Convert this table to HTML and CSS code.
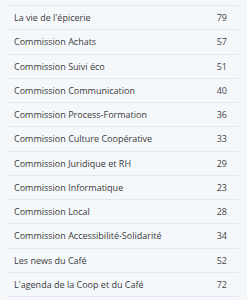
FILE: index.html
```html
<!DOCTYPE html>
<html lang="fr">
<head>
<meta charset="utf-8">
<link rel="stylesheet" href="styles.css">
</head>
<body>
<ul class="list">
  <li class="row"><span class="name">La vie de l'épicerie</span><span class="count">79</span></li>
  <li class="row"><span class="name">Commission Achats</span><span class="count">57</span></li>
  <li class="row"><span class="name">Commission Suivi éco</span><span class="count">51</span></li>
  <li class="row"><span class="name">Commission Communication</span><span class="count">40</span></li>
  <li class="row"><span class="name">Commission Process-Formation</span><span class="count">36</span></li>
  <li class="row"><span class="name">Commission Culture Coopérative</span><span class="count">33</span></li>
  <li class="row"><span class="name">Commission Juridique et RH</span><span class="count">29</span></li>
  <li class="row"><span class="name">Commission Informatique</span><span class="count">23</span></li>
  <li class="row"><span class="name">Commission Local</span><span class="count">28</span></li>
  <li class="row"><span class="name">Commission Accessibilité-Solidarité</span><span class="count">34</span></li>
  <li class="row"><span class="name">Les news du Café</span><span class="count">52</span></li>
  <li class="row"><span class="name">L'agenda de la Coop et du Café</span><span class="count">72</span></li>
</ul>
</body>
</html>
```
FILE: styles.css
```css
html, body {
  margin: 0;
  padding: 0;
  background: #f5f8fb;
}
body {
  font-family: "Open Sans", sans-serif;
  font-size: 9px;
  color: #3a3a3a;
  padding: 5px 8px 0 8px;
}
.list {
  list-style: none;
  margin: 0;
  padding: 0;
}
.row {
  display: flex;
  justify-content: space-between;
  align-items: center;
  height: 23.25px;
  border-top: 1px solid #e3e8ee;
  padding: 0 12px 0 6px;
}
.row:last-child {
  border-bottom: 1px solid #e3e8ee;
}
.count {
  color: #444;
}
```
